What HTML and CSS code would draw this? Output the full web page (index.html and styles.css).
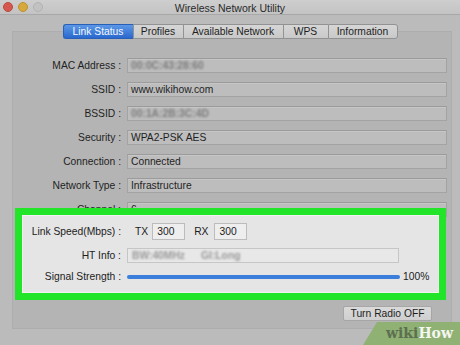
FILE: index.html
```html
<!DOCTYPE html>
<html>
<head>
<meta charset="utf-8">
<link rel="stylesheet" href="styles.css">
</head>
<body>
<div class="window">
  <div class="titlebar">
    <div class="lights">
      <span class="light red"></span>
      <span class="light yellow"></span>
      <span class="light gray"></span>
    </div>
    <div class="title">Wireless Network Utility</div>
    <div></div>
  </div>
  <div class="tabs">
    <div class="tab active w70">Link Status</div>
    <div class="tab w50">Profiles</div>
    <div class="tab w100">Available Network</div>
    <div class="tab w45">WPS</div>
    <div class="tab w70 last">Information</div>
  </div>
  <div class="panel">
    <div class="rows">
      <div class="row"><div class="label">MAC Address :</div><div class="field"><span class="blur">00:0C:43:28:60</span></div></div>
      <div class="row"><div class="label">SSID :</div><div class="field">www.wikihow.com</div></div>
      <div class="row"><div class="label">BSSID :</div><div class="field"><span class="blur">00:1A:2B:3C:4D</span></div></div>
      <div class="row"><div class="label">Security :</div><div class="field">WPA2-PSK AES</div></div>
      <div class="row"><div class="label">Connection :</div><div class="field">Connected</div></div>
      <div class="row"><div class="label">Network Type :</div><div class="field">Infrastructure</div></div>
      <div class="row"><div class="label">Channel :</div><div class="field">6</div></div>
    </div>
    <div class="highlight">
      <div class="inner">
        <div class="row">
          <div class="label ilabel">Link Speed(Mbps) :</div>
          <span class="unit tx">TX</span><div class="num">300</div>
          <span class="unit rx">RX</span><div class="num">300</div>
        </div>
        <div class="row">
          <div class="label ilabel">HT Info :</div>
          <div class="field ifield"><span class="blur b1">BW:40MHz</span><span class="blur b2">GI:Long</span></div>
        </div>
        <div class="row">
          <div class="label ilabel">Signal Strength :</div>
          <div class="bar"></div>
          <span class="pct">100%</span>
        </div>
      </div>
    </div>
    <div class="actions"><div class="btn">Turn Radio OFF</div></div>
  </div>
  <div class="badge"><span class="wiki">wiki</span><span class="how">How</span></div>
</div>
</body>
</html>
```

FILE: styles.css
```css
* { box-sizing: border-box; }
html, body { margin: 0; padding: 0; }
body {
  width: 460px;
  height: 345px;
  overflow: hidden;
  background: #bbbbbb;
  font-family: "Liberation Sans", Arial, sans-serif;
  font-size: 10.3px;
  color: #1f1f1f;
}
.window {
  position: relative;
  width: 460px;
  height: 345px;
  display: flex;
  flex-direction: column;
}
.titlebar {
  height: 15px;
  display: grid;
  grid-template-columns: 1fr auto 1fr;
  align-items: center;
  background: linear-gradient(#cecece, #c3c3c3);
  border-bottom: 1px solid #a8a8a8;
}
.lights { display: flex; gap: 5px; padding-left: 3px; }
.light { width: 10px; height: 10px; border-radius: 50%; display: block; }
.red { background: #d6574f; border: 1px solid #bb4a42; }
.yellow { background: #d6a93a; border: 1px solid #bd9330; }
.gray { background: #c2c2c2; border: 1px solid #b2b2b2; }
.title { font-size: 10.5px; color: #2a2a2a; padding-top: 1px; }

.tabs {
  margin-top: 9px;
  display: flex;
  justify-content: center;
  position: relative;
  z-index: 2;
}
.tab {
  height: 15px;
  line-height: 13px;
  text-align: center;
  background: linear-gradient(#d6d6d6, #c9c9c9);
  border: 1px solid #929292;
  border-right: none;
  color: #1e1e1e;
}
.tab.active {
  background: linear-gradient(#5c98e6, #2a68cf);
  border-color: #2a5fb8;
  color: #f4f8ff;
  border-radius: 3px 0 0 3px;
}
.tab.last { border-right: 1px solid #929292; border-radius: 0 3px 3px 0; }
.w70 { width: 70px; }
.w50 { width: 50px; }
.w100 { width: 100px; }
.w45 { width: 45px; }

.panel {
  margin: -8px 8px 0 12px;
  height: 298px;
  background: #b4b4b4;
  border: 1px solid #adadad;
  padding-top: 26px;
  display: flex;
  flex-direction: column;
}
.rows { display: flex; flex-direction: column; gap: 9px; }
.row { display: flex; align-items: center; }
.label {
  width: 108px;
  text-align: right;
  margin-right: 6px;
  white-space: nowrap;
}
.field {
  width: 320px;
  height: 15px;
  line-height: 13px;
  padding-left: 3px;
  background: #bdbdbd;
  border: 1px solid #a3a3a3;
  border-top-color: #9b9b9b;
  box-shadow: inset 0 1px 0 #c6c6c6;
  white-space: nowrap;
  overflow: hidden;
}
.blur {
  color: #7d7d7d;
  filter: blur(1px);
  display: inline-block;
  font-weight: bold;
}

.highlight {
  position: relative;
  z-index: 1;
  margin: -9px 0 0 2px;
  width: 431px;
  height: 92px;
  border: 7px solid #22e52a;
}
.inner {
  height: 100%;
  background: #e5e5e5;
  border: 1px solid #f2f2f2;
  padding-top: 7px;
  display: flex;
  flex-direction: column;
  gap: 8px;
}
.ilabel { width: 98px; color: #1c1c1c; }
.unit { color: #1c1c1c; }
.tx { margin-left: 8px; margin-right: 4px; }
.rx { margin-left: 9px; margin-right: 6px; }
.num {
  width: 33px;
  height: 17px;
  line-height: 15px;
  padding-left: 4px;
  background: #eeeeee;
  border: 1px solid #bcbcbc;
  color: #1c1c1c;
}
.ifield {
  width: 272px;
  background: #e8e8e8;
  border-color: #c6c6c6;
  box-shadow: none;
}
.b1 { margin-left: 1px; color: #9a9a9a; }
.b2 { margin-left: 16px; color: #9a9a9a; }
.bar {
  width: 273px;
  height: 4px;
  border-radius: 2px;
  background: #3b7edb;
}
.pct { margin-left: 3px; color: #1c1c1c; }

.actions {
  display: flex;
  justify-content: flex-end;
  margin-top: 6px;
  padding-right: 19px;
}
.btn {
  width: 89px;
  height: 15px;
  line-height: 13px;
  text-align: center;
  background: linear-gradient(#dadada, #cfcfcf);
  border: 1px solid #a6a6a6;
  border-radius: 2px;
  color: #1e1e1e;
}

.badge {
  position: absolute;
  right: 0;
  bottom: 0;
  width: 97px;
  height: 23px;
  background: #90b174;
  clip-path: polygon(14px 0, 100% 0, 100% 100%, 0 100%);
  font-family: "DejaVu Serif", "Liberation Serif", serif;
  font-weight: bold;
  font-size: 14px;
  line-height: 23px;
  padding-left: 23px;
  white-space: nowrap;
}
.wiki { color: #5d6f51; }
.how { color: #f4f6f0; }
```
